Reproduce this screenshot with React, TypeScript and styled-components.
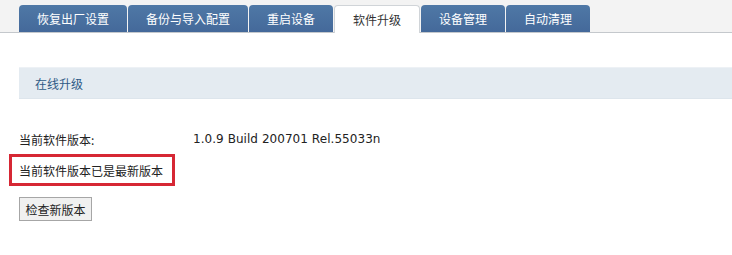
import React from 'react';
import styled, { createGlobalStyle } from 'styled-components';

const GlobalStyle = createGlobalStyle`
  html, body {
    margin: 0;
    padding: 0;
    background: #ffffff;
  }
  body {
    font-family: "DejaVu Sans", "Noto Sans CJK SC", sans-serif;
    font-size: 12px;
    color: #222222;
  }
`;

const Page = styled.div`
  width: 732px;
  height: 255px;
  overflow: hidden;
`;

const TabBar = styled.div`
  display: flex;
  align-items: flex-end;
  gap: 1px;
  height: 32px;
  padding-left: 19px;
  background: #f3f3f3;
  border-bottom: 1px solid #c4c8cc;
`;

const Tab = styled.div<{ $active?: boolean }>`
  height: ${(p) => (p.$active ? '28px' : '27px')};
  margin-bottom: ${(p) => (p.$active ? '-1px' : '0')};
  padding: 0 18px;
  display: flex;
  align-items: center;
  box-sizing: border-box;
  border-radius: 4px 4px 0 0;
  font-family: "Noto Sans CJK SC", sans-serif;
  font-size: 12px;
  color: ${(p) => (p.$active ? '#333333' : '#ffffff')};
  background: ${(p) =>
    p.$active ? '#ffffff' : 'linear-gradient(#4f78a6, #44699a)'};
  border: ${(p) => (p.$active ? '1px solid #d0d4d8' : 'none')};
  border-bottom: none;
`;

const Content = styled.div`
  padding: 34px 0 0 19px;
`;

const SectionHeader = styled.div`
  height: 32px;
  display: flex;
  align-items: center;
  padding-left: 16px;
  background: #e4ebf1;
  border-top: 1px solid #edf1f5;
  border-bottom: 1px solid #dde5ec;
  box-sizing: border-box;
  font-family: "Noto Sans CJK SC", sans-serif;
  color: #2f5a86;
`;

const InfoRow = styled.div`
  display: flex;
  align-items: center;
  margin-top: 31px;
  height: 18px;
`;

const Label = styled.span`
  width: 174px;
  font-family: "Noto Sans CJK SC", sans-serif;
`;

const Value = styled.span`
  font-family: "DejaVu Sans", sans-serif;
  letter-spacing: 0.05px;
`;

const Highlight = styled.div`
  display: inline-flex;
  align-items: center;
  margin: 6px 0 0 -10px;
  height: 32px;
  width: 166px;
  padding-left: 7px;
  box-sizing: border-box;
  border: 3px solid #d62734;
  font-family: "Noto Sans CJK SC", sans-serif;
`;

const CheckButton = styled.button`
  display: block;
  margin-top: 11px;
  width: 73px;
  height: 24px;
  padding: 0;
  background: #f0f0f0;
  border: 1px solid #a6a6a6;
  font-family: "Noto Sans CJK SC", sans-serif;
  font-size: 12px;
  color: #222222;
`;

const tabs = ['恢复出厂设置', '备份与导入配置', '重启设备', '软件升级', '设备管理', '自动清理'];

export default function App() {
  return (
    <Page>
      <GlobalStyle />
      <TabBar>
        {tabs.map((t) => (
          <Tab key={t} $active={t === '软件升级'}>
            {t}
          </Tab>
        ))}
      </TabBar>
      <Content>
        <SectionHeader>在线升级</SectionHeader>
        <InfoRow>
          <Label>当前软件版本:</Label>
          <Value>1.0.9 Build 200701 Rel.55033n</Value>
        </InfoRow>
        <Highlight>当前软件版本已是最新版本</Highlight>
        <CheckButton>检查新版本</CheckButton>
      </Content>
    </Page>
  );
}
